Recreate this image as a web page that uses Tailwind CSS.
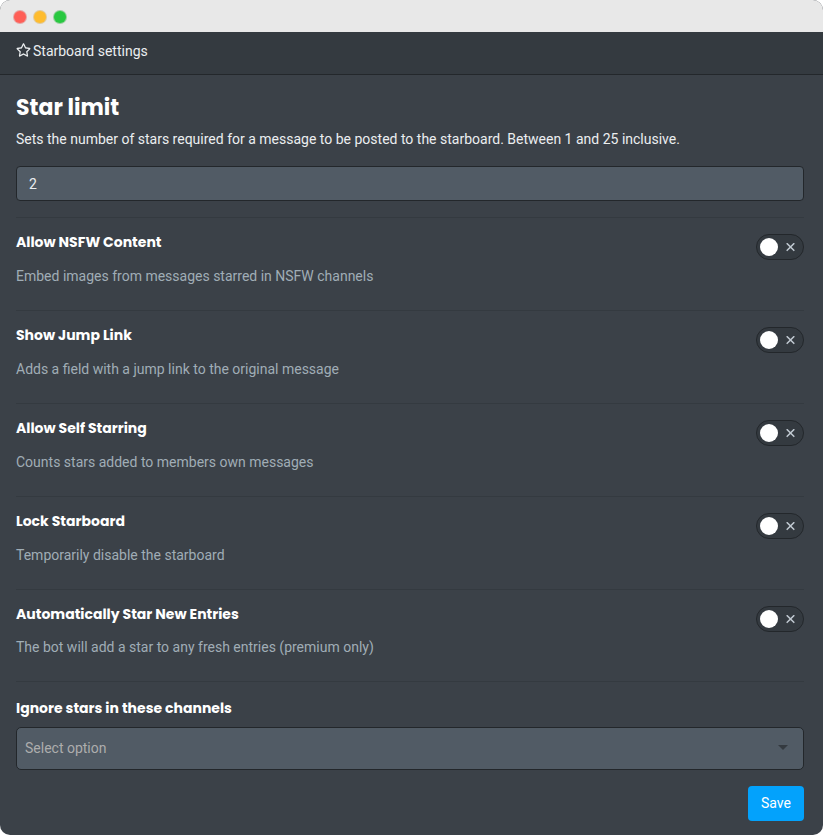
<!DOCTYPE html>
<html lang="en">
<head>
<meta charset="utf-8">
<meta name="viewport" content="width=device-width, initial-scale=1">
<title>Starboard settings</title>
<script src="https://cdn.jsdelivr.net/npm/@tailwindcss/browser@4"></script>
</head>
<body class="bg-white font-[Roboto,sans-serif] text-sm text-[#ebeef0]">
<div class="flex min-h-screen flex-col overflow-hidden rounded-[10px] bg-[#3b4148]">
  <div class="flex h-8 items-center gap-2 bg-[#e8e8e8] px-[14px] pt-[2px]">
    <span class="size-3 rounded-full bg-[#ff5f57] ring-1 ring-[#e0443e]/40"></span>
    <span class="size-3 rounded-full bg-[#febc2e] ring-1 ring-[#d89e24]/40"></span>
    <span class="size-3 rounded-full bg-[#28c840] ring-1 ring-[#1aab29]/40"></span>
  </div>
  <header class="flex h-[43px] items-center gap-[2px] border-b border-[#23272b] bg-[#343a40] px-4 pb-1">
    <svg class="-mt-[2px] h-[14px] w-[15px]" viewBox="0 0 576 512" fill="currentColor" aria-hidden="true"><path d="M528.1 171.5L382 150.2 316.7 17.8c-11.7-23.600-45.600-23.900-57.400 0L194 150.200 47.900 171.500c-26.200 3.800-36.700 36.100-17.700 54.600l105.700 103-25 145.500c-4.500 26.300 23.200 46 46.400 33.700L288 439.600l130.700 68.700c23.200 12.200 50.900-7.400 46.400-33.700l-25-145.500 105.700-103c19-18.500 8.500-50.800-17.700-54.600zM388.600 312.300l23.700 138.400L288 385.400l-124.300 65.300 23.700-138.400-100.600-98 139-20.200 62.200-126 62.200 126 139 20.200-100.600 98z"/></svg>
    <span>Starboard settings</span>
  </header>
  <main class="px-4 pt-[19px] pb-[14px] sm:pr-[19px]">
    <h1 class="font-[Poppins,Inter,sans-serif] text-[22px] leading-7 font-bold text-white"><label for="limit">Star limit</label></h1>
    <p class="mt-[7px] mb-[17px] leading-5">Sets the number of stars required for a message to be posted to the starboard. Between 1 and 25 inclusive.</p>
    <input id="limit" type="text" inputmode="numeric" value="2" class="mb-4 block h-[35px] w-full rounded border border-[#23272b] bg-[#515b65] px-3 outline-none">

    <section class="flex items-start justify-between border-t border-[#343a40] pt-4 pb-6">
      <div>
        <h2 id="nsfw" class="font-[Poppins,Inter,sans-serif] leading-[17px] font-bold text-white">Allow NSFW Content</h2>
        <p class="mt-[15px] leading-5 text-[#a0adb6]">Embed images from messages starred in NSFW channels</p>
      </div>
      <label class="flex h-[26px] w-12 shrink-0 items-center justify-between rounded-full border border-[#23272b] bg-[#343a40] pr-2 pl-[3px]">
        <input type="checkbox" aria-labelledby="nsfw" class="sr-only">
        <span class="size-[18px] rounded-full bg-white"></span>
        <svg class="size-[9px]" viewBox="0 0 9 9" fill="none" stroke="#c0c9d1" stroke-width="1.5" aria-hidden="true"><path d="M.7.2l7.600 7.600M8.300.2L.7 7.800"/></svg>
      </label>
    </section>

    <section class="flex items-start justify-between border-t border-[#343a40] pt-4 pb-6">
      <div>
        <h2 id="jump" class="font-[Poppins,Inter,sans-serif] leading-[17px] font-bold text-white">Show Jump Link</h2>
        <p class="mt-[15px] leading-5 text-[#a0adb6]">Adds a field with a jump link to the original message</p>
      </div>
      <label class="flex h-[26px] w-12 shrink-0 items-center justify-between rounded-full border border-[#23272b] bg-[#343a40] pr-2 pl-[3px]">
        <input type="checkbox" aria-labelledby="jump" class="sr-only">
        <span class="size-[18px] rounded-full bg-white"></span>
        <svg class="size-[9px]" viewBox="0 0 9 9" fill="none" stroke="#c0c9d1" stroke-width="1.5" aria-hidden="true"><path d="M.7.2l7.600 7.600M8.300.2L.7 7.800"/></svg>
      </label>
    </section>

    <section class="flex items-start justify-between border-t border-[#343a40] pt-4 pb-6">
      <div>
        <h2 id="self" class="font-[Poppins,Inter,sans-serif] leading-[17px] font-bold text-white">Allow Self Starring</h2>
        <p class="mt-[15px] leading-5 text-[#a0adb6]">Counts stars added to members own messages</p>
      </div>
      <label class="flex h-[26px] w-12 shrink-0 items-center justify-between rounded-full border border-[#23272b] bg-[#343a40] pr-2 pl-[3px]">
        <input type="checkbox" aria-labelledby="self" class="sr-only">
        <span class="size-[18px] rounded-full bg-white"></span>
        <svg class="size-[9px]" viewBox="0 0 9 9" fill="none" stroke="#c0c9d1" stroke-width="1.5" aria-hidden="true"><path d="M.7.2l7.600 7.600M8.300.2L.7 7.800"/></svg>
      </label>
    </section>

    <section class="flex items-start justify-between border-t border-[#343a40] pt-4 pb-6">
      <div>
        <h2 id="lock" class="font-[Poppins,Inter,sans-serif] leading-[17px] font-bold text-white">Lock Starboard</h2>
        <p class="mt-[15px] leading-5 text-[#a0adb6]">Temporarily disable the starboard</p>
      </div>
      <label class="flex h-[26px] w-12 shrink-0 items-center justify-between rounded-full border border-[#23272b] bg-[#343a40] pr-2 pl-[3px]">
        <input type="checkbox" aria-labelledby="lock" class="sr-only">
        <span class="size-[18px] rounded-full bg-white"></span>
        <svg class="size-[9px]" viewBox="0 0 9 9" fill="none" stroke="#c0c9d1" stroke-width="1.5" aria-hidden="true"><path d="M.7.2l7.600 7.600M8.300.2L.7 7.800"/></svg>
      </label>
    </section>

    <section class="flex items-start justify-between border-t border-[#343a40] pt-4 pb-6">
      <div>
        <h2 id="auto" class="font-[Poppins,Inter,sans-serif] leading-[17px] font-bold text-white">Automatically Star New Entries</h2>
        <p class="mt-[14px] leading-5 text-[#a0adb6]">The bot will add a star to any fresh entries (premium only)</p>
      </div>
      <label class="flex h-[26px] w-12 shrink-0 items-center justify-between rounded-full border border-[#23272b] bg-[#343a40] pr-2 pl-[3px]">
        <input type="checkbox" aria-labelledby="auto" class="sr-only">
        <span class="size-[18px] rounded-full bg-white"></span>
        <svg class="size-[9px]" viewBox="0 0 9 9" fill="none" stroke="#c0c9d1" stroke-width="1.5" aria-hidden="true"><path d="M.7.2l7.600 7.600M8.300.2L.7 7.800"/></svg>
      </label>
    </section>

    <section class="border-t border-[#343a40] pt-[18px]">
      <label for="channels" class="block font-[Poppins,Inter,sans-serif] leading-[17px] font-bold text-white">Ignore stars in these channels</label>
      <div class="relative mt-[10px]">
        <select id="channels" class="block h-[43px] w-full appearance-none rounded-[5px] border border-[#23272b] bg-[#515b65] px-2 pb-[2px] text-[#adadad] outline-none">
          <option>Select option</option>
        </select>
        <svg class="pointer-events-none absolute top-[18px] right-4 h-[5px] w-[10px]" viewBox="0 0 10 5" fill="#343a40" aria-hidden="true"><path d="M0 0h10L5 5z"/></svg>
      </div>
    </section>
    <div class="mt-4 flex justify-end">
      <button type="button" class="h-[35px] rounded bg-[#03a2fc] px-[13px] pb-px text-white">Save</button>
    </div>
  </main>
</div>
</body>
</html>
